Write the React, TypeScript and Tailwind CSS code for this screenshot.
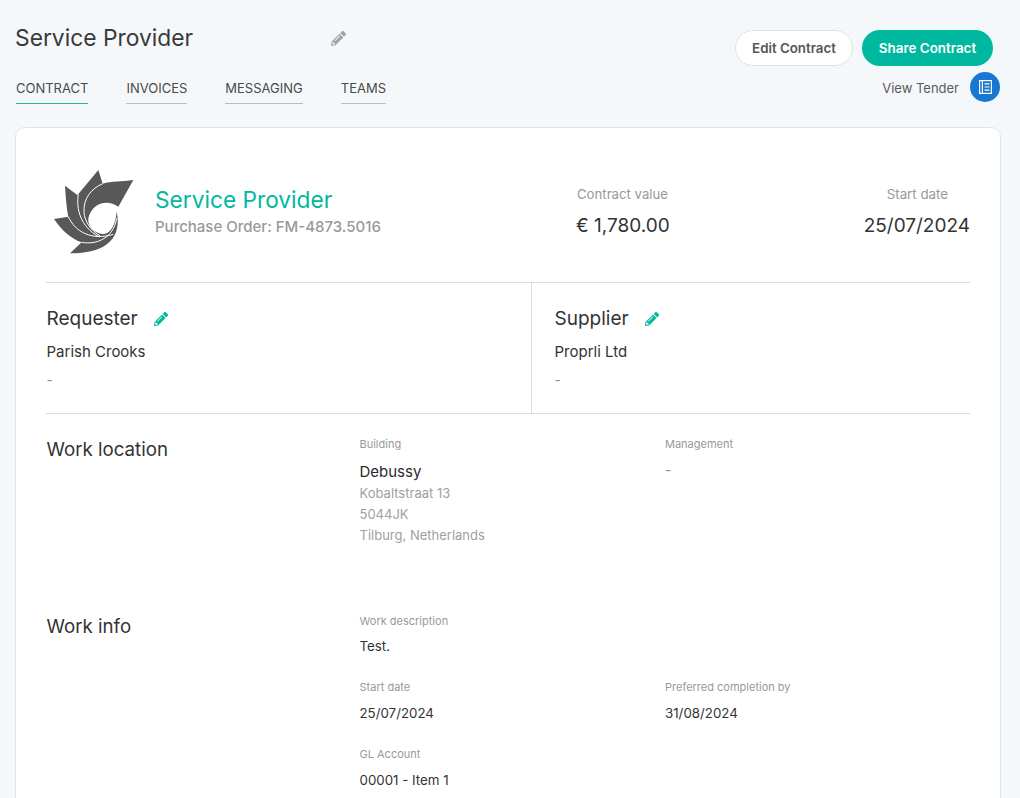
import { FaPencilAlt } from "react-icons/fa";

const font = { fontFamily: "Inter, sans-serif" };

function Logo() {
    return (
        <svg viewBox="0 0 270 285" className="w-[90px] h-[95px] ml-[4px] shrink-0">
            <path
                fill="#58585a"
                d="M250 45 L205 125 C170 100 125 115 115 160 C112 185 135 208 160 207 C185 205 197 175 200 140 C215 210 180 265 60 265 L95 232 C60 220 35 195 12 162 L55 155 C50 130 47 95 45 62 L82 90 L87 85 L145 15 L158 56 C185 48 215 50 250 45 Z"
            />
            <g fill="none" stroke="white" strokeWidth="3">
                <path d="M158 56 C125 70 100 100 102 140 C103 170 125 200 150 212" />
                <path d="M85 88 C78 130 90 185 148 216" />
                <path d="M55 155 C75 200 125 228 190 208" />
                <path d="M95 232 C140 240 190 220 200 160" />
            </g>
        </svg>
    );
}

function Tab({ label, active }: { label: string; active?: boolean }) {
    return (
        <div className={`h-[26px] text-[13px] leading-[21px] text-[#4a4a4a] border-b ${active ? "border-[#1fb89f]" : "border-[#b9bcc2]"}`}>
            {label}
        </div>
    );
}

function Field({ label, value }: { label: string; value: string }) {
    return (
        <div>
            <div className="text-[11px] leading-[14px] text-[#999999]">{label}</div>
            <div className="mt-[11px] text-[13.3px] leading-[16px] text-[#333333]">{value}</div>
        </div>
    );
}

function Party({ title, name }: { title: string; name: string }) {
    return (
        <>
            <div className="flex items-center gap-[16px] h-[26px]">
                <span className="text-[19px] text-[#333333]">{title}</span>
                <FaPencilAlt className="w-[14px] h-[14px] text-[#00b8a0]" />
            </div>
            <div className="mt-[10px] text-[15px] leading-[20px] text-[#333333]">{name}</div>
            <div className="mt-[8px] text-sm leading-[20px] text-[#8f8f8f]">-</div>
        </>
    );
}

export default function App() {
    return (
        <div style={font} className="h-[798px] overflow-hidden bg-[#f5f8fb] pl-[15px] pr-[19px]">
            <div className="flex justify-between h-[127px]">
                <div>
                    <div className="flex items-center pt-[18px] h-[58px]">
                        <h1 className="w-[316px] text-[22.8px] leading-[32px] text-[#3a3a3a]">Service Provider</h1>
                        <FaPencilAlt className="w-[15px] h-[15px] text-[#a3a3a3]" />
                    </div>
                    <div className="flex gap-[38px] mt-[20px] pl-px">
                        <Tab label="CONTRACT" active />
                        <Tab label="INVOICES" />
                        <Tab label="MESSAGING" />
                        <Tab label="TEAMS" />
                    </div>
                </div>
                <div className="flex flex-col items-end pt-[30px]">
                    <div className="flex gap-[9px] pr-[8px]">
                        <button className="w-[118px] h-9 pt-px rounded-full bg-white border border-[#dfe2ea] text-[13.3px] font-semibold text-[#555555]">Edit Contract</button>
                        <button className="w-[131px] h-9 pt-px rounded-full bg-[#00b8a0] text-[13.4px] font-semibold text-white">Share Contract</button>
                    </div>
                    <div className="flex items-center gap-[11px] mt-[6px] pr-px">
                        <span className="pt-[3px] text-[13px] text-[#5a5a5a]">View Tender</span>
                        <span className="w-[30px] h-[30px] rounded-full bg-[#1976d2] flex items-center justify-center">
                            <svg viewBox="0 0 13 14" className="w-[13px] h-[14px]" fill="none" stroke="white" strokeWidth="1.2">
                                <rect x="0.6" y="0.6" width="11.8" height="12.8" />
                                <path d="M3.4 0.6v12.8M5.5 3.8h5M5.5 7h5M5.5 10.2h5" />
                            </svg>
                        </span>
                    </div>
                </div>
            </div>

            <div className="h-[700px] bg-white border border-[#e0e4ea] rounded-[10px] px-[30px]">
                <div className="flex items-center h-[155px] border-b border-[#dcdcdc] pt-[14px]">
                    <Logo />
                    <div className="ml-[15px] w-[421px] -mt-px">
                        <div className="text-[22.7px] leading-[30px] text-[#00b8a0]">Service Provider</div>
                        <div className="text-[15px] leading-[24px] text-[#999999] font-medium">Purchase Order: FM-4873.5016</div>
                    </div>
                    <div className="w-[93px] text-center whitespace-nowrap">
                        <div className="text-[13.2px] leading-[18px] text-[#999999]">Contract value</div>
                        <div className="mt-[10px] text-[19px] leading-[26px] text-[#333333]">€ 1,780.00</div>
                    </div>
                    <div className="ml-auto text-right whitespace-nowrap">
                        <div className="text-[13.3px] leading-[18px] text-[#999999] pr-[22px]">Start date</div>
                        <div className="mt-[10px] text-[19px] leading-[26px] text-[#333333]">25/07/2024</div>
                    </div>
                </div>

                <div className="grid grid-cols-[486px_1fr] h-[131px] border-b border-[#dcdcdc]">
                    <div className="border-r border-[#dcdcdc] pt-[23px] pl-[0.5px]">
                        <Party title="Requester" name="Parish Crooks" />
                    </div>
                    <div className="pl-[22.5px] pt-[23px]">
                        <Party title="Supplier" name="Proprli Ltd" />
                    </div>
                </div>

                <div className="grid grid-cols-[313.5px_305.5px_1fr] pt-[23px] h-[199px]">
                    <div className="pl-[0.5px] text-[18.7px] leading-[26px] text-[#333333]">Work location</div>
                    <div>
                        <div className="text-[11px] leading-[14px] text-[#999999]">Building</div>
                        <div className="mt-[11px] text-[15px] leading-[20px] text-[#2b2b2b]">Debussy</div>
                        <div className="mt-[1px] text-[13px] leading-[21px] text-[#a0a0a0]">
                            Kobaltstraat 13<br />5044JK<br />Tilburg, Netherlands
                        </div>
                    </div>
                    <div>
                        <div className="text-[11px] leading-[14px] text-[#999999]">Management</div>
                        <div className="mt-[12px] text-sm leading-[14px] text-[#8f8f8f]">-</div>
                    </div>
                </div>

                <div className="grid grid-cols-[313.5px_305.5px_1fr]">
                    <div className="pl-[0.5px] pt-px text-[18.7px] leading-[26px] text-[#333333]">Work info</div>
                    <div className="col-span-2 flex flex-col pt-[1px]">
                        <div className="text-[11px] leading-[14px] text-[#999999]">Work description</div>
                        <div className="mt-[10px] mb-[26px] text-[13.3px] leading-[16px] text-[#333333]">Test.</div>
                        <div className="grid grid-cols-[305.5px_1fr] mb-[26px]">
                            <Field label="Start date" value="25/07/2024" />
                            <Field label="Preferred completion by" value="31/08/2024" />
                        </div>
                        <Field label="GL Account" value="00001 - Item 1" />
                    </div>
                </div>
            </div>
        </div>
    );
}
